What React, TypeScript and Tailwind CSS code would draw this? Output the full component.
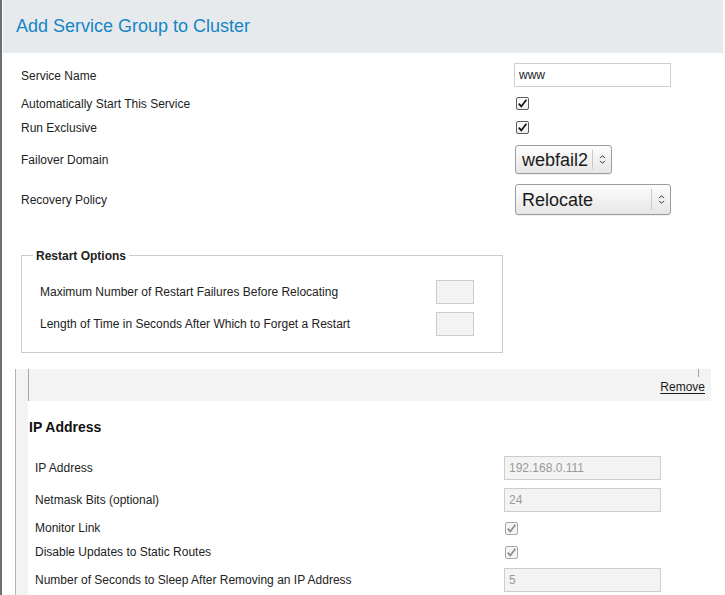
import React from "react";

function Check({ disabled }: { disabled?: boolean }) {
  return (
    <span
      className={
        disabled
          ? "flex h-[13px] w-[13px] items-center justify-center rounded-[2px] border border-[#a9a9a9] bg-[#f4f4f4]"
          : "flex h-[13px] w-[13px] items-center justify-center rounded-[2px] border border-[#5c5c5c] bg-linear-to-b from-[#ffffff] to-[#ececec]"
      }
    >
      <svg width="11" height="11" viewBox="0 0 11 11">
        <path
          d="M1.8 5.6 L4.3 8.4 L9.4 1.8"
          fill="none"
          stroke={disabled ? "#8a8a8a" : "#111"}
          strokeWidth="1.7"
        />
      </svg>
    </span>
  );
}

function Chevrons() {
  return (
    <svg width="7" height="11" viewBox="0 0 7 11">
      <path d="M1 4.2 L3.5 1.7 L6 4.2" fill="none" stroke="#333" strokeWidth="1" />
      <path d="M1 6.8 L3.5 9.3 L6 6.8" fill="none" stroke="#333" strokeWidth="1" />
    </svg>
  );
}

function Select({ value, w, h }: { value: string; w: string; h: string }) {
  return (
    <div
      className={`${w} ${h} flex items-center rounded-[3px] border border-[#9c9c9c] bg-linear-to-b from-[#fdfdfd] to-[#e6e6e6] shadow-[0_1px_0_rgba(0,0,0,0.06)]`}
    >
      <span className="flex-1 pl-[6px] text-[18px] leading-[20px] text-[#1a1a1a]">{value}</span>
      <span className="my-[4px] w-px self-stretch bg-[#c9c9c9]" />
      <span className="flex w-[18px] justify-center">
        <Chevrons />
      </span>
    </div>
  );
}

export default function App() {
  return (
    <div className="flex h-[595px] w-[725px] overflow-hidden bg-white font-['Liberation_Sans',Arial,sans-serif] text-[12px] text-[#222]">
      <div className="w-[2px] shrink-0 bg-[#6e6e6e]" />
      <div className="ml-[1px] flex w-[720px] flex-col">
        {/* Header */}
        <div className="flex h-[53px] shrink-0 items-center bg-[#e6eaed] pb-[2px] pl-[13px]">
          <h1 className="text-[18px] leading-[22px] text-[#1685c6]">Add Service Group to Cluster</h1>
        </div>

        {/* Top form */}
        <div className="flex flex-col pl-[18px]">
          <div className="mt-[10px] flex h-[24px] items-center">
            <span className="w-[493px] pt-px">Service Name</span>
            <div className="flex h-[24px] w-[157px] items-center border border-[#cfcfcf] bg-white pl-[4px]">
              www
            </div>
          </div>
          <div className="flex h-[32px] items-center">
            <span className="w-[493px] pt-px">Automatically Start This Service</span>
            <span className="ml-[2px]">
              <Check />
            </span>
          </div>
          <div className="flex h-[16px] items-center">
            <span className="w-[493px] pt-px">Run Exclusive</span>
            <span className="ml-[2px]">
              <Check />
            </span>
          </div>
          <div className="mt-[10px] flex h-[29px] items-center">
            <span className="w-[494px]">Failover Domain</span>
            <Select value="webfail2" w="w-[97px]" h="h-[29px]" />
          </div>
          <div className="mt-[10px] flex h-[31px] items-center">
            <span className="w-[494px]">Recovery Policy</span>
            <Select value="Relocate" w="w-[156px]" h="h-[31px]" />
          </div>

          {/* Restart Options */}
          <div className="relative mt-[40px] h-[98px] w-[482px] border border-[#cccccc] pt-[24px]">
            <span className="absolute -top-[7px] left-[11px] bg-white px-[3px] font-bold leading-[14px]">
              Restart Options
            </span>
            <div className="flex h-[24px] items-center pl-[18px]">
              <span className="w-[396px]">Maximum Number of Restart Failures Before Relocating</span>
              <div className="h-[24px] w-[38px] border border-[#cccccc] bg-[#f3f3f3]" />
            </div>
            <div className="mt-[8px] flex h-[24px] items-center pl-[18px]">
              <span className="w-[396px]">Length of Time in Seconds After Which to Forget a Restart</span>
              <div className="h-[24px] w-[38px] border border-[#cccccc] bg-[#f3f3f3]" />
            </div>
          </div>
        </div>

        {/* Resource panel */}
        <div className="ml-[12px] mt-[16px] flex w-[696px] flex-1 flex-col border-l border-[#b3b3b3] bg-[#f3f3f3]">
          <div className="ml-[12px] flex flex-1 flex-col">
            <div className="flex h-[32px] flex-col items-end border-l border-[#a8a8a8] bg-[#f3f3f3]">
              <span className="mr-[12px] h-[8px] w-px bg-[#a0a0a0]" />
              <span className="mr-[6px] mt-[3px] leading-[14px] text-[#1a1a1a] underline underline-offset-[2px]">
                Remove
              </span>
            </div>
            <div className="flex flex-1 flex-col bg-white pl-[1px]">
              <h2 className="mt-[18px] h-[17px] text-[14px] font-bold leading-[17px] text-[#111]">IP Address</h2>
              <div className="flex flex-col pl-[6px]">
                <div className="mt-[20px] flex h-[24px] items-center">
                  <span className="w-[469px]">IP Address</span>
                  <div className="flex h-[24px] w-[157px] items-center border border-[#cccccc] bg-[#f3f3f3] pl-[4px] text-[#9a9a9a]">
                    192.168.0.111
                  </div>
                </div>
                <div className="mt-[8px] flex h-[24px] items-center">
                  <span className="w-[469px]">Netmask Bits (optional)</span>
                  <div className="flex h-[24px] w-[157px] items-center border border-[#cccccc] bg-[#f3f3f3] pl-[4px] text-[#9a9a9a]">
                    24
                  </div>
                </div>
                <div className="mt-[4px] flex h-[24px] items-center">
                  <span className="w-[469px]">Monitor Link</span>
                  <span className="ml-[1px]">
                    <Check disabled />
                  </span>
                </div>
                <div className="flex h-[24px] items-center">
                  <span className="w-[469px]">Disable Updates to Static Routes</span>
                  <span className="ml-[1px]">
                    <Check disabled />
                  </span>
                </div>
                <div className="mt-[4px] flex h-[24px] items-center">
                  <span className="w-[469px]">Number of Seconds to Sleep After Removing an IP Address</span>
                  <div className="flex h-[24px] w-[157px] items-center border border-[#cccccc] bg-[#f3f3f3] pl-[4px] text-[#9a9a9a]">
                    5
                  </div>
                </div>
              </div>
            </div>
          </div>
        </div>
      </div>
    </div>
  );
}
